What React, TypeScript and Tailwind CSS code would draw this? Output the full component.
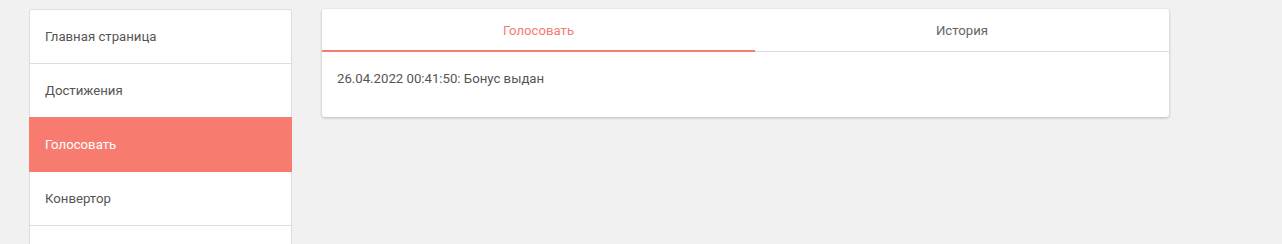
import { useState } from "react";

const menu = ["Главная страница", "Достижения", "Голосовать", "Конвертор", ""];

export default function App() {
  const [active, setActive] = useState(2);
  const [tab, setTab] = useState(0);

  return (
    <div className="h-[244px] overflow-hidden bg-[#f1f1f1] font-['Roboto',sans-serif] text-[13.2px] text-[#555]">
      <div className="flex items-start gap-[30px] pl-[29px] pt-[9px]">
        <div className="w-[263px] shrink-0 rounded-t-[3px] border border-[#dddddd] bg-white">
          {menu.map((item, i) => (
            <button
              key={i}
              onClick={() => setActive(i)}
              className={
                i === active
                  ? "relative block h-[55px] -mt-px -mx-px w-[calc(100%+2px)] bg-[#f77b6f] px-[16px] text-left text-white"
                  : "block h-[54px] w-full border-b border-[#dddddd] px-[15px] text-left"
              }
            >
              {item}
            </button>
          ))}
        </div>

        <div className="w-[847px] shrink-0 rounded-[3px] bg-white shadow-[0_1px_3px_rgba(0,0,0,0.25)]">
          <div className="flex h-[43px] border-b border-[#dddddd]">
            <button
              onClick={() => setTab(0)}
              className={
                "relative w-[433px] pt-[1px] " +
                (tab === 0 ? "text-[#f77b6f]" : "text-[#666]")
              }
            >
              Голосовать
              {tab === 0 && (
                <span className="absolute left-0 right-0 -bottom-px h-[2px] bg-[#f77b6f]" />
              )}
            </button>
            <button
              onClick={() => setTab(1)}
              className={
                "relative flex-1 pt-[1px] " +
                (tab === 1 ? "text-[#f77b6f]" : "text-[#666]")
              }
            >
              История
              {tab === 1 && (
                <span className="absolute left-0 right-0 -bottom-px h-[2px] bg-[#f77b6f]" />
              )}
            </button>
          </div>
          <div className="h-[65px] px-[15px] pt-[17px]">
            26.04.2022 00:41:50: Бонус выдан
          </div>
        </div>
      </div>
    </div>
  );
}
